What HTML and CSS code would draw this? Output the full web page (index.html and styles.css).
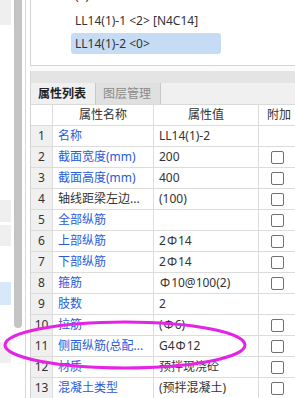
FILE: index.html
```html
<!DOCTYPE html>
<html lang="zh-CN">
  <head>
    <meta charset="UTF-8" />
    <meta name="viewport" content="width=device-width, initial-scale=1.0" />
    <title>属性列表</title>

    <link rel="stylesheet" href="styles.css">
  </head>
  <body>
    <div class="app">
      <!-- Left list, scrolled mostly out of view -->
      <div class="side">
        <div class="side-list">
          <div class="side-item shade"></div>
          <div class="side-item side-text">)</div>
          <div class="side-item shade first-block"></div>
          <div class="side-item shade"></div>
          <div class="side-item picked"></div>
          <div class="side-item shade last-block"></div>
        </div>
        <div class="side-scroll"><div class="thumb"></div></div>
        <div class="side-edge"></div>
      </div>

      <div class="main">
        <!-- Component tree -->
        <div class="tree">
          <ul class="tree-list">
            <li class="tree-item">(1)</li>
            <li class="tree-item">LL14(1)-1 &lt;2&gt; [N4C14]</li>
            <li class="tree-item selected">LL14(1)-2 &lt;0&gt;</li>
          </ul>
        </div>

        <!-- Property panel -->
        <div class="props">
          <div class="props-top"></div>
          <div class="tabs">
            <div class="tab active">属性列表</div>
            <div class="tab">图层管理</div>
          </div>

          <div class="grid">
            <div class="row head">
              <div class="cell num"></div>
              <div class="cell center">属性名称</div>
              <div class="cell center">属性值</div>
              <div class="cell center">附加</div>
            </div>
            <div class="row">
              <div class="cell num">1</div>
              <div class="cell name">名称</div>
              <div class="cell">LL14(1)-2</div>
              <div class="cell"></div>
            </div>
            <div class="row">
              <div class="cell num">2</div>
              <div class="cell name">截面宽度(mm)</div>
              <div class="cell">200</div>
              <div class="cell check"><span class="box"></span></div>
            </div>
            <div class="row">
              <div class="cell num">3</div>
              <div class="cell name">截面高度(mm)</div>
              <div class="cell">400</div>
              <div class="cell check"><span class="box"></span></div>
            </div>
            <div class="row">
              <div class="cell num">4</div>
              <div class="cell name plain">轴线距梁左边...</div>
              <div class="cell">(100)</div>
              <div class="cell check"><span class="box"></span></div>
            </div>
            <div class="row">
              <div class="cell num">5</div>
              <div class="cell name">全部纵筋</div>
              <div class="cell"></div>
              <div class="cell check"><span class="box"></span></div>
            </div>
            <div class="row">
              <div class="cell num">6</div>
              <div class="cell name">上部纵筋</div>
              <div class="cell">2<span class="bar">Φ</span>14</div>
              <div class="cell check"><span class="box"></span></div>
            </div>
            <div class="row">
              <div class="cell num">7</div>
              <div class="cell name">下部纵筋</div>
              <div class="cell">2<span class="bar">Φ</span>14</div>
              <div class="cell check"><span class="box"></span></div>
            </div>
            <div class="row">
              <div class="cell num">8</div>
              <div class="cell name">箍筋</div>
              <div class="cell"><span class="bar">Φ</span>10@100(2)</div>
              <div class="cell check"><span class="box"></span></div>
            </div>
            <div class="row">
              <div class="cell num">9</div>
              <div class="cell name">肢数</div>
              <div class="cell">2</div>
              <div class="cell"></div>
            </div>
            <div class="row">
              <div class="cell num">10</div>
              <div class="cell name">拉筋</div>
              <div class="cell">(<span class="bar">Φ</span>6)</div>
              <div class="cell check"><span class="box"></span></div>
            </div>
            <div class="row">
              <div class="cell num">11</div>
              <div class="cell name">侧面纵筋(总配...</div>
              <div class="cell">G4<span class="bar">Φ</span>12</div>
              <div class="cell check"><span class="box"></span></div>
            </div>
            <div class="row">
              <div class="cell num">12</div>
              <div class="cell name">材质</div>
              <div class="cell">预拌现浇砼</div>
              <div class="cell check"><span class="box"></span></div>
            </div>
            <div class="row">
              <div class="cell num">13</div>
              <div class="cell name">混凝土类型</div>
              <div class="cell">(预拌混凝土)</div>
              <div class="cell check"><span class="box"></span></div>
            </div>
          </div>
        </div>
      </div>
    </div>

    <!-- Hand drawn marker round row 11 -->
    <svg class="marker" width="295" height="398" viewBox="0 0 295 398">
      <ellipse cx="125" cy="345" rx="120" ry="23" fill="none" stroke="#e622e6" stroke-width="3" />
    </svg>
  </body>
</html>
```

FILE: styles.css
```css
* {
  box-sizing: border-box;
}

body {
  margin: 0;
  width: 295px;
  height: 398px;
  overflow: hidden;
  position: relative;
  background: #fafafa;
  color: #333;
  font-family: "Noto Sans", "Noto Sans CJK SC", sans-serif;
  font-size: 12px;
}

.app {
  display: flex;
  height: 398px;
}

/* left list */
.side {
  display: flex;
  flex: none;
  width: 30px;
  background: #fff;
}

.side-list {
  width: 11px;
  overflow: hidden;
}

.side-item {
  height: 22px;
}

.shade {
  background: #efefef;
}

.side-item:first-child {
  height: 25px;
}

.side-text {
  margin-top: 38px;
  margin-left: -5px;
  height: 16px;
  line-height: 16px;
  color: #b0306a;
}

.first-block {
  margin-top: 121px;
}

.side-item + .side-item.shade:not(.first-block):not(.last-block) {
  margin-top: 3px;
  height: 21px;
}

.picked {
  margin-top: 36px;
  height: 23px;
  background: #d7e8fb;
}

.last-block {
  margin-top: 37px;
  height: 21px;
}

.side-scroll {
  width: 8px;
  margin-left: 3px;
}

.thumb {
  height: 328px;
  background: #c4c4c4;
  border-radius: 0 0 4px 4px;
}

.side-edge {
  width: 1px;
  margin-left: 3px;
  background: #d8d8d8;
}

/* right column */
.main {
  flex: 1;
  min-width: 0;
  display: flex;
  flex-direction: column;
  gap: 5px;
}

.tree {
  flex: none;
  height: 66px;
  overflow: hidden;
  background: #fff;
  border-left: 1px solid #d4d4d4;
  border-bottom: 1px solid #d4d4d4;
}

.tree-list {
  list-style: none;
  margin: -15px 0 0 0;
  padding: 0 0 0 40px;
}

.tree-item {
  width: 150px;
  height: 21px;
  line-height: 21px;
  margin-bottom: 2px;
  padding: 0 4px;
  border-radius: 3px;
  white-space: nowrap;
}

.tree-item:first-child {
  margin-bottom: 4px;
}

.tree-item.selected {
  background: #c6dcf4;
}

.props {
  flex: 1;
  background: #fff;
  border-left: 1px solid #d4d4d4;
}

.props-top {
  height: 12px;
  background: #e4e4e4;
}

.tabs {
  display: flex;
  height: 22px;
  background: #f0f0f0;
  border-bottom: 1px solid #dadada;
}

.tab {
  width: 65px;
  padding-left: 7px;
  line-height: 21px;
  color: #8a8a8a;
  background: #e0e0e0;
  border-right: 1px solid #c8c8c8;
}

.tab.active {
  color: #222;
  font-weight: bold;
  background: #f0f0f0;
}

/* property grid */
.row {
  display: grid;
  grid-template-columns: 22px 101px 105px 41px;
  height: 21px;
}

.cell {
  padding-left: 5px;
  line-height: 20px;
  white-space: nowrap;
  overflow: hidden;
  border-right: 1px solid #dcdcdc;
  border-bottom: 1px solid #dcdcdc;
}

.cell.num {
  padding-left: 0;
  text-align: center;
  background: #f0f0f0;
}

.head .cell.num {
  background: #fff;
}

.cell.center {
  padding-left: 0;
  text-align: center;
  color: #333;
}

.cell.name {
  color: #2a5bdc;
}

.cell.name.plain {
  color: #333;
}

.bar {
  margin: 0 1px;
}

.cell.check {
  display: flex;
  align-items: center;
  padding-left: 12px;
}

.box {
  width: 13px;
  height: 13px;
  border: 1px solid #707070;
  border-radius: 2px;
  background: #fff;
}

.marker {
  position: absolute;
  left: 0;
  top: 0;
  pointer-events: none;
}
```
